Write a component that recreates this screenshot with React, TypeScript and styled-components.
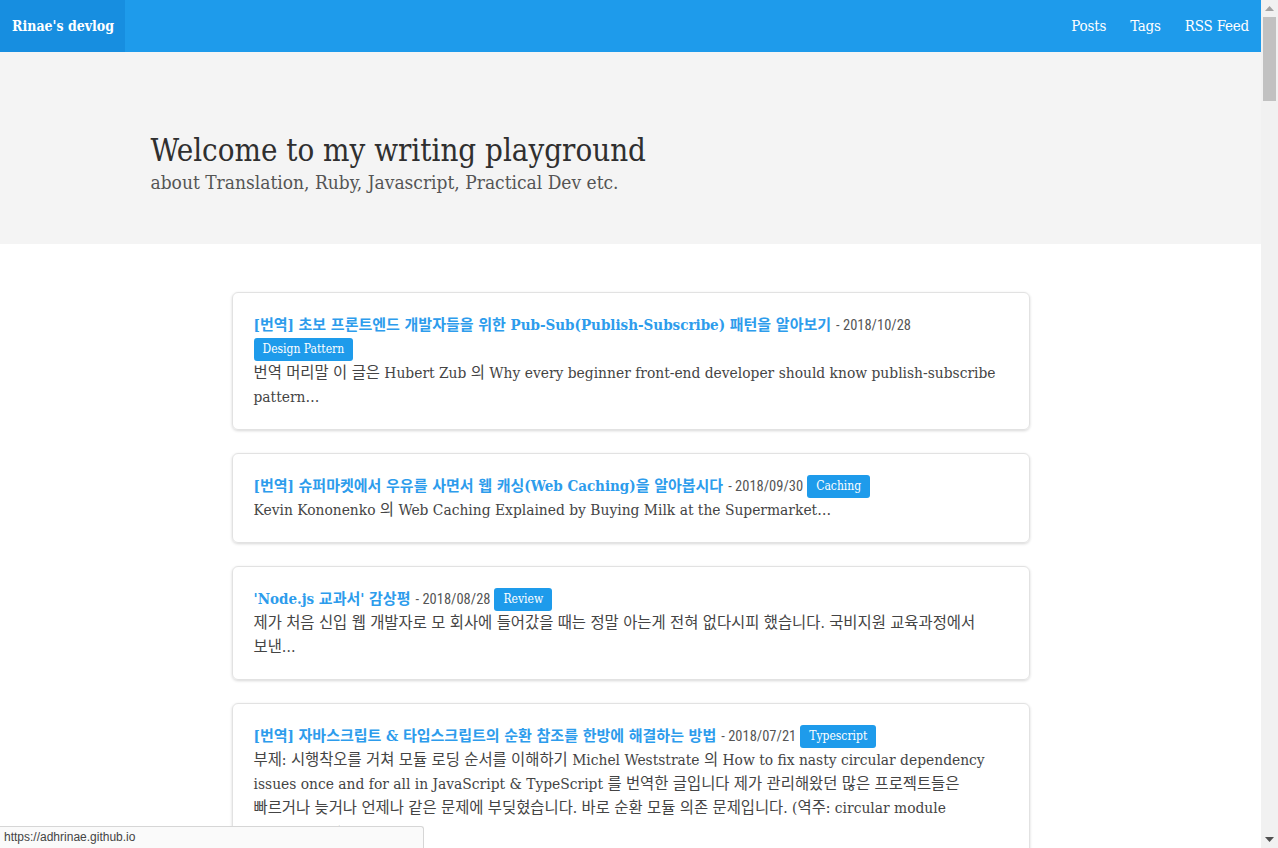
import React from "react";
import styled, { createGlobalStyle } from "styled-components";

const SERIF = `"DejaVu Serif Condensed", "DejaVu Serif", "Noto Sans CJK KR", serif`;

const GlobalStyle = createGlobalStyle`
  html, body { margin: 0; padding: 0; height: 100%; overflow: hidden; }
  body { font-family: ${SERIF}; font-stretch: condensed; color: #444; background: #fff; }
  * { box-sizing: border-box; }
`;

const Frame = styled.div`
  display: flex;
  height: 100vh;
  width: 100vw;
`;

const Page = styled.div`
  flex: 1;
  min-width: 0;
  overflow: hidden;
`;

const NavBar = styled.header`
  display: flex;
  justify-content: space-between;
  align-items: stretch;
  height: 52px;
  background: #1e9beb;
`;

const Brand = styled.a`
  display: flex;
  align-items: center;
  padding: 0 11px 0 12px;
  background: #178ee0;
  color: #fff;
  font-weight: bold;
  font-size: 14px;
  text-decoration: none;
`;

const NavLinks = styled.nav`
  display: flex;
  align-items: center;
`;

const NavLink = styled.a`
  padding: 0 12px;
  color: #fff;
  font-size: 15px;
  letter-spacing: -0.2px;
  text-decoration: none;
`;

const Hero = styled.section`
  height: 192px;
  background: #f4f4f4;
  padding-top: 78px;
`;

const Container = styled.div`
  width: 960px;
  margin: 0 auto;
`;

const HeroTitle = styled.h1`
  margin: 0;
  font-size: 31px;
  line-height: 40px;
  font-weight: normal;
  color: #2f2f2f;
`;

const HeroSub = styled.p`
  margin: 0;
  font-size: 19px;
  line-height: 24px;
  color: #555;
`;

const PostList = styled.main`
  padding-top: 48px;
  display: flex;
  flex-direction: column;
  align-items: center;
  gap: 23px;
`;

const Card = styled.article`
  width: 798px;
  border: 1px solid #e2e2e2;
  border-radius: 6px;
  box-shadow: 0 1px 3px rgba(0, 0, 0, 0.16);
  padding: 20px 22px 20px 21px;
  line-height: 24px;
  font-size: 15.4px;
  word-break: keep-all;
`;

const Header = styled.div`
  line-height: 24px;
  height: auto;
`;

const PostTitle = styled.a`
  color: #2d9cec;
  font-weight: bold;
  font-size: 15px;
  line-height: 1;
  text-decoration: none;
`;

const PostDate = styled.span`
  font-family: Roboto, "Noto Sans CJK KR", sans-serif;
  font-size: 14.5px;
  line-height: 1;
  color: #555;
  margin: 0 4px 0 5px;
`;

const Tag = styled.span`
  display: inline-block;
  height: 23px;
  line-height: 23px;
  margin-top: 1px;
  padding: 0 9px;
  border-radius: 3px;
  background: #1e9beb;
  color: #fff;
  font-size: 12px;
  vertical-align: top;
`;

const Excerpt = styled.p`
  margin: 0;
  color: #444;
  font-size: 15.4px;
  line-height: 24px;
`;

const ScrollBar = styled.div`
  width: 17px;
  flex-shrink: 0;
  background: #f1f1f1;
  display: flex;
  flex-direction: column;
  align-items: center;
`;

const ScrollButton = styled.div`
  height: 17px;
  width: 17px;
  display: flex;
  align-items: center;
  justify-content: center;
`;

const Thumb = styled.div`
  width: 13px;
  height: 84px;
  background: #c1c1c1;
`;

const Spacer = styled.div`
  flex: 1;
`;

const StatusBar = styled.div`
  position: fixed;
  left: 0;
  bottom: 0;
  width: 424px;
  height: 22px;
  background: #fafafa;
  border-top: 1px solid #d6d6d6;
  border-right: 1px solid #d6d6d6;
  border-top-right-radius: 3px;
  padding-left: 4px;
  font-family: "Liberation Sans", Arial, sans-serif;
  font-size: 12px;
  line-height: 21px;
  color: #444;
`;

type Post = {
  title: string;
  date: string;
  tag: string;
  excerpt: string;
};

const posts: Post[] = [
  {
    title: "[번역] 초보 프론트엔드 개발자들을 위한 Pub-Sub(Publish-Subscribe) 패턴을 알아보기",
    date: "2018/10/28",
    tag: "Design Pattern",
    excerpt:
      "번역 머리말 이 글은 Hubert Zub 의 Why every beginner front-end developer should know publish-subscribe pattern…",
  },
  {
    title: "[번역] 슈퍼마켓에서 우유를 사면서 웹 캐싱(Web Caching)을 알아봅시다",
    date: "2018/09/30",
    tag: "Caching",
    excerpt: "Kevin Kononenko 의 Web Caching Explained by Buying Milk at the Supermarket…",
  },
  {
    title: "'Node.js 교과서' 감상평",
    date: "2018/08/28",
    tag: "Review",
    excerpt:
      "제가 처음 신입 웹 개발자로 모 회사에 들어갔을 때는 정말 아는게 전혀 없다시피 했습니다. 국비지원 교육과정에서 보낸…",
  },
  {
    title: "[번역] 자바스크립트 & 타입스크립트의 순환 참조를 한방에 해결하는 방법",
    date: "2018/07/21",
    tag: "Typescript",
    excerpt:
      "부제: 시행착오를 거쳐 모듈 로딩 순서를 이해하기 Michel Weststrate 의 How to fix nasty circular dependency issues once and for all in JavaScript & TypeScript 를 번역한 글입니다 제가 관리해왔던 많은 프로젝트들은 빠르거나 늦거나 언제나 같은 문제에 부딪혔습니다. 바로 순환 모듈 의존 문제입니다. (역주: circular module dependency)…",
  },
];

export default function App() {
  return (
    <>
      <GlobalStyle />
      <Frame>
        <Page>
          <NavBar>
            <Brand href="#">Rinae's devlog</Brand>
            <NavLinks>
              <NavLink href="#">Posts</NavLink>
              <NavLink href="#">Tags</NavLink>
              <NavLink href="#">RSS Feed</NavLink>
            </NavLinks>
          </NavBar>
          <Hero>
            <Container>
              <HeroTitle>Welcome to my writing playground</HeroTitle>
              <HeroSub>about Translation, Ruby, Javascript, Practical Dev etc.</HeroSub>
            </Container>
          </Hero>
          <PostList>
            {posts.map((p) => (
              <Card key={p.title}>
                <Header>
                  <PostTitle href="#">{p.title}</PostTitle>
                  <PostDate>- {p.date}</PostDate>
                  <Tag>{p.tag}</Tag>
                </Header>
                <Excerpt>{p.excerpt}</Excerpt>
              </Card>
            ))}
          </PostList>
        </Page>
        <ScrollBar>
          <ScrollButton>
            <svg width="9" height="5" viewBox="0 0 9 5">
              <polygon points="0,5 4.5,0 9,5" fill="#a3a3a3" />
            </svg>
          </ScrollButton>
          <Thumb />
          <Spacer />
          <ScrollButton>
            <svg width="9" height="5" viewBox="0 0 9 5">
              <polygon points="0,0 4.5,5 9,0" fill="#505050" />
            </svg>
          </ScrollButton>
        </ScrollBar>
      </Frame>
      <StatusBar>https://adhrinae.github.io</StatusBar>
    </>
  );
}
